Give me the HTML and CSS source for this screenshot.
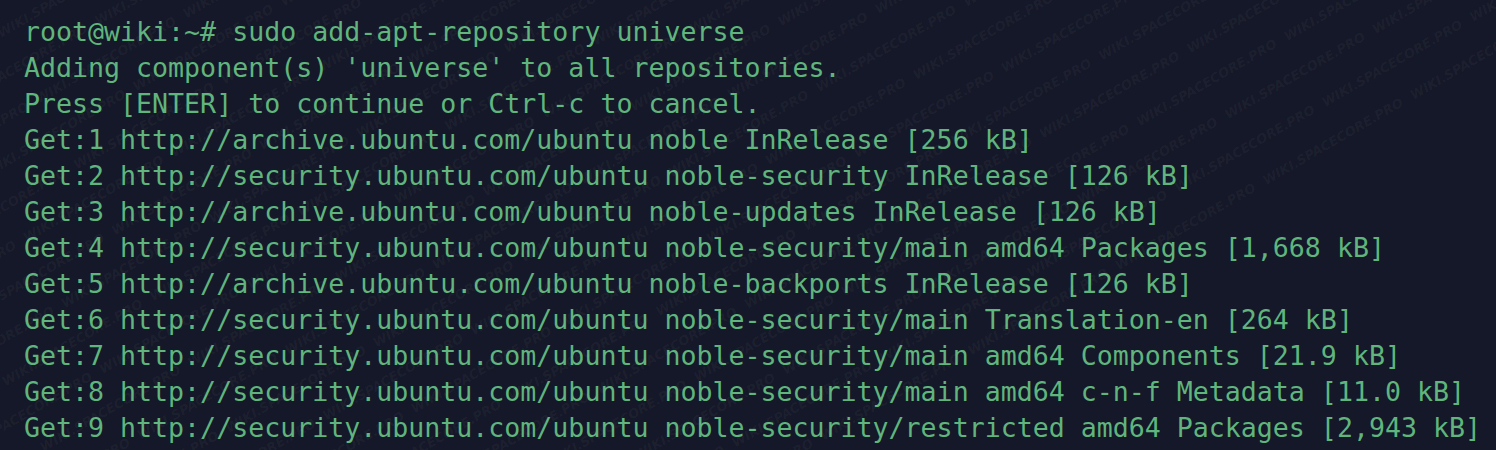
FILE: index.html
```html
<!DOCTYPE html>
<html lang="en">
<head>
<meta charset="utf-8">
<title>Terminal</title>
<link rel="stylesheet" href="styles.css">
</head>
<body>
<div class="terminal">
<pre class="output">root@wiki:~# sudo add-apt-repository universe
Adding component(s) 'universe' to all repositories.
Press [ENTER] to continue or Ctrl-c to cancel.
Get:1 http://archive.ubuntu.com/ubuntu noble InRelease [256 kB]
Get:2 http://security.ubuntu.com/ubuntu noble-security InRelease [126 kB]
Get:3 http://archive.ubuntu.com/ubuntu noble-updates InRelease [126 kB]
Get:4 http://security.ubuntu.com/ubuntu noble-security/main amd64 Packages [1,668 kB]
Get:5 http://archive.ubuntu.com/ubuntu noble-backports InRelease [126 kB]
Get:6 http://security.ubuntu.com/ubuntu noble-security/main Translation-en [264 kB]
Get:7 http://security.ubuntu.com/ubuntu noble-security/main amd64 Components [21.9 kB]
Get:8 http://security.ubuntu.com/ubuntu noble-security/main amd64 c-n-f Metadata [11.0 kB]
Get:9 http://security.ubuntu.com/ubuntu noble-security/restricted amd64 Packages [2,943 kB]</pre>
<div class="watermark" aria-hidden="true">
<div class="wm-rows">
<div class="wm-row">WIKI.SPACECORE.PRO WIKI.SPACECORE.PRO WIKI.SPACECORE.PRO WIKI.SPACECORE.PRO WIKI.SPACECORE.PRO WIKI.SPACECORE.PRO WIKI.SPACECORE.PRO WIKI.SPACECORE.PRO WIKI.SPACECORE.PRO WIKI.SPACECORE.PRO WIKI.SPACECORE.PRO WIKI.SPACECORE.PRO WIKI.SPACECORE.PRO WIKI.SPACECORE.PRO</div>
<div class="wm-row shift">WIKI.SPACECORE.PRO WIKI.SPACECORE.PRO WIKI.SPACECORE.PRO WIKI.SPACECORE.PRO WIKI.SPACECORE.PRO WIKI.SPACECORE.PRO WIKI.SPACECORE.PRO WIKI.SPACECORE.PRO WIKI.SPACECORE.PRO WIKI.SPACECORE.PRO WIKI.SPACECORE.PRO WIKI.SPACECORE.PRO WIKI.SPACECORE.PRO WIKI.SPACECORE.PRO</div>
<div class="wm-row">WIKI.SPACECORE.PRO WIKI.SPACECORE.PRO WIKI.SPACECORE.PRO WIKI.SPACECORE.PRO WIKI.SPACECORE.PRO WIKI.SPACECORE.PRO WIKI.SPACECORE.PRO WIKI.SPACECORE.PRO WIKI.SPACECORE.PRO WIKI.SPACECORE.PRO WIKI.SPACECORE.PRO WIKI.SPACECORE.PRO WIKI.SPACECORE.PRO WIKI.SPACECORE.PRO</div>
<div class="wm-row shift">WIKI.SPACECORE.PRO WIKI.SPACECORE.PRO WIKI.SPACECORE.PRO WIKI.SPACECORE.PRO WIKI.SPACECORE.PRO WIKI.SPACECORE.PRO WIKI.SPACECORE.PRO WIKI.SPACECORE.PRO WIKI.SPACECORE.PRO WIKI.SPACECORE.PRO WIKI.SPACECORE.PRO WIKI.SPACECORE.PRO WIKI.SPACECORE.PRO WIKI.SPACECORE.PRO</div>
<div class="wm-row">WIKI.SPACECORE.PRO WIKI.SPACECORE.PRO WIKI.SPACECORE.PRO WIKI.SPACECORE.PRO WIKI.SPACECORE.PRO WIKI.SPACECORE.PRO WIKI.SPACECORE.PRO WIKI.SPACECORE.PRO WIKI.SPACECORE.PRO WIKI.SPACECORE.PRO WIKI.SPACECORE.PRO WIKI.SPACECORE.PRO WIKI.SPACECORE.PRO WIKI.SPACECORE.PRO</div>
<div class="wm-row shift">WIKI.SPACECORE.PRO WIKI.SPACECORE.PRO WIKI.SPACECORE.PRO WIKI.SPACECORE.PRO WIKI.SPACECORE.PRO WIKI.SPACECORE.PRO WIKI.SPACECORE.PRO WIKI.SPACECORE.PRO WIKI.SPACECORE.PRO WIKI.SPACECORE.PRO WIKI.SPACECORE.PRO WIKI.SPACECORE.PRO WIKI.SPACECORE.PRO WIKI.SPACECORE.PRO</div>
<div class="wm-row">WIKI.SPACECORE.PRO WIKI.SPACECORE.PRO WIKI.SPACECORE.PRO WIKI.SPACECORE.PRO WIKI.SPACECORE.PRO WIKI.SPACECORE.PRO WIKI.SPACECORE.PRO WIKI.SPACECORE.PRO WIKI.SPACECORE.PRO WIKI.SPACECORE.PRO WIKI.SPACECORE.PRO WIKI.SPACECORE.PRO WIKI.SPACECORE.PRO WIKI.SPACECORE.PRO</div>
<div class="wm-row shift">WIKI.SPACECORE.PRO WIKI.SPACECORE.PRO WIKI.SPACECORE.PRO WIKI.SPACECORE.PRO WIKI.SPACECORE.PRO WIKI.SPACECORE.PRO WIKI.SPACECORE.PRO WIKI.SPACECORE.PRO WIKI.SPACECORE.PRO WIKI.SPACECORE.PRO WIKI.SPACECORE.PRO WIKI.SPACECORE.PRO WIKI.SPACECORE.PRO WIKI.SPACECORE.PRO</div>
<div class="wm-row">WIKI.SPACECORE.PRO WIKI.SPACECORE.PRO WIKI.SPACECORE.PRO WIKI.SPACECORE.PRO WIKI.SPACECORE.PRO WIKI.SPACECORE.PRO WIKI.SPACECORE.PRO WIKI.SPACECORE.PRO WIKI.SPACECORE.PRO WIKI.SPACECORE.PRO WIKI.SPACECORE.PRO WIKI.SPACECORE.PRO WIKI.SPACECORE.PRO WIKI.SPACECORE.PRO</div>
<div class="wm-row shift">WIKI.SPACECORE.PRO WIKI.SPACECORE.PRO WIKI.SPACECORE.PRO WIKI.SPACECORE.PRO WIKI.SPACECORE.PRO WIKI.SPACECORE.PRO WIKI.SPACECORE.PRO WIKI.SPACECORE.PRO WIKI.SPACECORE.PRO WIKI.SPACECORE.PRO WIKI.SPACECORE.PRO WIKI.SPACECORE.PRO WIKI.SPACECORE.PRO WIKI.SPACECORE.PRO</div>
<div class="wm-row">WIKI.SPACECORE.PRO WIKI.SPACECORE.PRO WIKI.SPACECORE.PRO WIKI.SPACECORE.PRO WIKI.SPACECORE.PRO WIKI.SPACECORE.PRO WIKI.SPACECORE.PRO WIKI.SPACECORE.PRO WIKI.SPACECORE.PRO WIKI.SPACECORE.PRO WIKI.SPACECORE.PRO WIKI.SPACECORE.PRO WIKI.SPACECORE.PRO WIKI.SPACECORE.PRO</div>
<div class="wm-row shift">WIKI.SPACECORE.PRO WIKI.SPACECORE.PRO WIKI.SPACECORE.PRO WIKI.SPACECORE.PRO WIKI.SPACECORE.PRO WIKI.SPACECORE.PRO WIKI.SPACECORE.PRO WIKI.SPACECORE.PRO WIKI.SPACECORE.PRO WIKI.SPACECORE.PRO WIKI.SPACECORE.PRO WIKI.SPACECORE.PRO WIKI.SPACECORE.PRO WIKI.SPACECORE.PRO</div>
<div class="wm-row">WIKI.SPACECORE.PRO WIKI.SPACECORE.PRO WIKI.SPACECORE.PRO WIKI.SPACECORE.PRO WIKI.SPACECORE.PRO WIKI.SPACECORE.PRO WIKI.SPACECORE.PRO WIKI.SPACECORE.PRO WIKI.SPACECORE.PRO WIKI.SPACECORE.PRO WIKI.SPACECORE.PRO WIKI.SPACECORE.PRO WIKI.SPACECORE.PRO WIKI.SPACECORE.PRO</div>
<div class="wm-row shift">WIKI.SPACECORE.PRO WIKI.SPACECORE.PRO WIKI.SPACECORE.PRO WIKI.SPACECORE.PRO WIKI.SPACECORE.PRO WIKI.SPACECORE.PRO WIKI.SPACECORE.PRO WIKI.SPACECORE.PRO WIKI.SPACECORE.PRO WIKI.SPACECORE.PRO WIKI.SPACECORE.PRO WIKI.SPACECORE.PRO WIKI.SPACECORE.PRO WIKI.SPACECORE.PRO</div>
<div class="wm-row">WIKI.SPACECORE.PRO WIKI.SPACECORE.PRO WIKI.SPACECORE.PRO WIKI.SPACECORE.PRO WIKI.SPACECORE.PRO WIKI.SPACECORE.PRO WIKI.SPACECORE.PRO WIKI.SPACECORE.PRO WIKI.SPACECORE.PRO WIKI.SPACECORE.PRO WIKI.SPACECORE.PRO WIKI.SPACECORE.PRO WIKI.SPACECORE.PRO WIKI.SPACECORE.PRO</div>
<div class="wm-row shift">WIKI.SPACECORE.PRO WIKI.SPACECORE.PRO WIKI.SPACECORE.PRO WIKI.SPACECORE.PRO WIKI.SPACECORE.PRO WIKI.SPACECORE.PRO WIKI.SPACECORE.PRO WIKI.SPACECORE.PRO WIKI.SPACECORE.PRO WIKI.SPACECORE.PRO WIKI.SPACECORE.PRO WIKI.SPACECORE.PRO WIKI.SPACECORE.PRO WIKI.SPACECORE.PRO</div>
<div class="wm-row">WIKI.SPACECORE.PRO WIKI.SPACECORE.PRO WIKI.SPACECORE.PRO WIKI.SPACECORE.PRO WIKI.SPACECORE.PRO WIKI.SPACECORE.PRO WIKI.SPACECORE.PRO WIKI.SPACECORE.PRO WIKI.SPACECORE.PRO WIKI.SPACECORE.PRO WIKI.SPACECORE.PRO WIKI.SPACECORE.PRO WIKI.SPACECORE.PRO WIKI.SPACECORE.PRO</div>
<div class="wm-row shift">WIKI.SPACECORE.PRO WIKI.SPACECORE.PRO WIKI.SPACECORE.PRO WIKI.SPACECORE.PRO WIKI.SPACECORE.PRO WIKI.SPACECORE.PRO WIKI.SPACECORE.PRO WIKI.SPACECORE.PRO WIKI.SPACECORE.PRO WIKI.SPACECORE.PRO WIKI.SPACECORE.PRO WIKI.SPACECORE.PRO WIKI.SPACECORE.PRO WIKI.SPACECORE.PRO</div>
<div class="wm-row">WIKI.SPACECORE.PRO WIKI.SPACECORE.PRO WIKI.SPACECORE.PRO WIKI.SPACECORE.PRO WIKI.SPACECORE.PRO WIKI.SPACECORE.PRO WIKI.SPACECORE.PRO WIKI.SPACECORE.PRO WIKI.SPACECORE.PRO WIKI.SPACECORE.PRO WIKI.SPACECORE.PRO WIKI.SPACECORE.PRO WIKI.SPACECORE.PRO WIKI.SPACECORE.PRO</div>
<div class="wm-row shift">WIKI.SPACECORE.PRO WIKI.SPACECORE.PRO WIKI.SPACECORE.PRO WIKI.SPACECORE.PRO WIKI.SPACECORE.PRO WIKI.SPACECORE.PRO WIKI.SPACECORE.PRO WIKI.SPACECORE.PRO WIKI.SPACECORE.PRO WIKI.SPACECORE.PRO WIKI.SPACECORE.PRO WIKI.SPACECORE.PRO WIKI.SPACECORE.PRO WIKI.SPACECORE.PRO</div>
<div class="wm-row">WIKI.SPACECORE.PRO WIKI.SPACECORE.PRO WIKI.SPACECORE.PRO WIKI.SPACECORE.PRO WIKI.SPACECORE.PRO WIKI.SPACECORE.PRO WIKI.SPACECORE.PRO WIKI.SPACECORE.PRO WIKI.SPACECORE.PRO WIKI.SPACECORE.PRO WIKI.SPACECORE.PRO WIKI.SPACECORE.PRO WIKI.SPACECORE.PRO WIKI.SPACECORE.PRO</div>
<div class="wm-row shift">WIKI.SPACECORE.PRO WIKI.SPACECORE.PRO WIKI.SPACECORE.PRO WIKI.SPACECORE.PRO WIKI.SPACECORE.PRO WIKI.SPACECORE.PRO WIKI.SPACECORE.PRO WIKI.SPACECORE.PRO WIKI.SPACECORE.PRO WIKI.SPACECORE.PRO WIKI.SPACECORE.PRO WIKI.SPACECORE.PRO WIKI.SPACECORE.PRO WIKI.SPACECORE.PRO</div>
<div class="wm-row">WIKI.SPACECORE.PRO WIKI.SPACECORE.PRO WIKI.SPACECORE.PRO WIKI.SPACECORE.PRO WIKI.SPACECORE.PRO WIKI.SPACECORE.PRO WIKI.SPACECORE.PRO WIKI.SPACECORE.PRO WIKI.SPACECORE.PRO WIKI.SPACECORE.PRO WIKI.SPACECORE.PRO WIKI.SPACECORE.PRO WIKI.SPACECORE.PRO WIKI.SPACECORE.PRO</div>
<div class="wm-row shift">WIKI.SPACECORE.PRO WIKI.SPACECORE.PRO WIKI.SPACECORE.PRO WIKI.SPACECORE.PRO WIKI.SPACECORE.PRO WIKI.SPACECORE.PRO WIKI.SPACECORE.PRO WIKI.SPACECORE.PRO WIKI.SPACECORE.PRO WIKI.SPACECORE.PRO WIKI.SPACECORE.PRO WIKI.SPACECORE.PRO WIKI.SPACECORE.PRO WIKI.SPACECORE.PRO</div>
</div>
</div>
</div>
</body>
</html>
```
FILE: styles.css
```css
* { box-sizing: border-box; }
html, body {
  margin: 0;
  padding: 0;
  background: #151828;
}
.terminal {
  position: relative;
  width: 1496px;
  height: 450px;
  overflow: hidden;
  background: #151828;
  padding: 14px 0 0 24px;
}
.output {
  margin: 0;
  font-family: "DejaVu Sans Mono", "Liberation Mono", monospace;
  font-size: 26.6px;
  line-height: 36px;
  color: #5fb57d;
  white-space: pre;
}
.watermark {
  position: absolute;
  inset: 0;
  overflow: hidden;
  pointer-events: none;
}
.wm-rows {
  position: absolute;
  left: -700px;
  top: -500px;
  width: 3000px;
  display: flex;
  flex-direction: column;
  gap: 22px;
  transform: rotate(-30deg);
  transform-origin: center center;
}
.wm-row {
  font-family: "DejaVu Sans", "Liberation Sans", sans-serif;
  font-weight: bold;
  font-style: italic;
  font-size: 13px;
  line-height: 16px;
  white-space: nowrap;
  word-spacing: 6px;
  color: rgba(255, 255, 255, 0.045);
}
.wm-row.shift {
  padding-left: 80px;
}
```
